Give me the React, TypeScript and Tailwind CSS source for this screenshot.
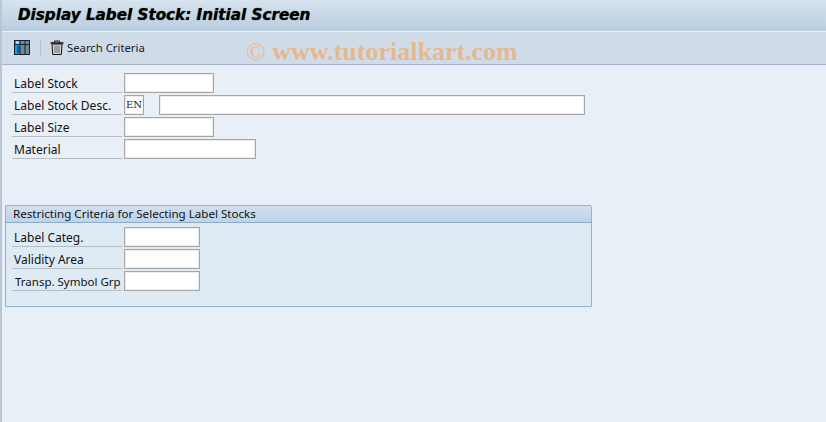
const uiFont = "[font-family:'Noto_Sans',sans-serif]";

const Field = ({ label, children, wide, tight }: { label: string; children?: React.ReactNode; wide?: string; tight?: boolean }) => (
  <div className="flex h-[22px]">
    <div className={`flex h-5 w-[110px] items-start whitespace-nowrap border-b border-[#b5bcc2] pt-[4px] leading-[14px] text-[#111] ${tight ? 'pl-[3px] text-[11.500px]' : 'pl-[2px] text-[12px]'}`}>
      {label}
    </div>
    <div className="ml-[2px] flex">
      {children ?? <Input w={wide ?? 'w-[90px]'} />}
    </div>
  </div>
);

const Input = ({ w, text }: { w: string; text?: string }) => (
  <div className={`${w} flex h-5 items-center justify-center border border-[#a6a6a6] bg-white font-['DejaVu_Serif',serif] text-[10px] leading-none text-[#1c1c3a] shadow-[inset_0_0_0_1px_#ececec]`}>
    {text}
  </div>
);

export default function App() {
  return (
    <div className={`relative flex h-[422px] w-[826px] flex-col overflow-hidden border-l-2 border-[#b9c6d4] bg-[#e8eff7] ${uiFont}`}>
      {/* Title bar */}
      <div className="flex h-[31px] items-center bg-gradient-to-b from-[#d7e3ee] to-[#b9cde0] pl-4">
        <h1 className="font-['DejaVu_Sans',sans-serif] text-[15.200px] font-bold italic leading-none text-black [text-shadow:0_0_1px_#333]">
          Display Label Stock: Initial Screen
        </h1>
      </div>

      {/* Toolbar */}
      <div className="flex h-[34px] items-center border-y border-t-[#eaf1f7] border-b-[#a3b4c6] bg-[#cfdce8] pl-3">
        <svg width="17" height="16" viewBox="0 0 17 16" className="shrink-0">
          <rect x="0.5" y="0.5" width="15" height="14" fill="#6d8a99" stroke="#0c2230" />
          <rect x="1" y="1" width="5" height="13" fill="#129be6" />
          <rect x="2" y="1" width="3" height="3" fill="#9fd8f7" />
          <rect x="3" y="6" width="2" height="7" fill="#0b5f9c" />
          <path d="M6 1v13M11 1v13M1 4.500h14" stroke="#0c2230" strokeWidth="1" fill="none" />
        </svg>
        <div className="ml-[9px] h-4 w-px bg-[#b0c2d4]" />
        <svg width="14" height="16" viewBox="0 0 14 16" className="ml-[9px] shrink-0">
          <path d="M0.500 3h13" stroke="#111" strokeWidth="1.500" />
          <path d="M4.500 2.500V1h5v1.500" stroke="#111" fill="none" />
          <path d="M2 4h10l-.7 10.500H2.700z" fill="#d6d6d6" stroke="#111" />
          <path d="M5 5.500v7.500M7 5.500v7.500M9 5.500v7.500" stroke="#6b6b6b" />
        </svg>
        <span className="ml-[3px] text-[11.300px] leading-none text-[#17202a]">Search Criteria</span>
      </div>

      {/* Selection fields */}
      <div className="ml-[10px] mt-2 flex flex-col">
        <Field label="Label Stock" />
        <Field label="Label Stock Desc.">
          <Input w="w-5" text="EN" />
          <div className="ml-[15px]">
            <Input w="w-[426px]" />
          </div>
        </Field>
        <Field label="Label Size" />
        <Field label="Material" wide="w-[132px]" />
      </div>

      {/* Restricting criteria group */}
      <div className="ml-[3px] mt-[44px] h-[102px] w-[587px] rounded-tr-[2px] border border-[#94b3d1] bg-[#deebf4]">
        <div className="flex h-[17px] items-center border-b border-[#8fabc9] bg-gradient-to-b from-[#d0e0ef] to-[#bed4e8] pl-[7px] text-[11.600px] leading-none text-[#111]">
          Restricting Criteria for Selecting Label Stocks
        </div>
        <div className="ml-[6px] mt-1 flex flex-col">
          <Field label="Label Categ." wide="w-[76px]" />
          <Field label="Validity Area" wide="w-[76px]" />
          <Field label="Transp. Symbol Grp" wide="w-[76px]" tight />
        </div>
      </div>

      {/* Watermark */}
      <div className="absolute left-[244px] top-[38px] whitespace-nowrap font-['Liberation_Serif',serif] text-[26px] font-bold leading-[28px] text-[#e6b88f]">
        <span className="font-normal">©</span> www.tutorialkart.com
      </div>
    </div>
  );
}
